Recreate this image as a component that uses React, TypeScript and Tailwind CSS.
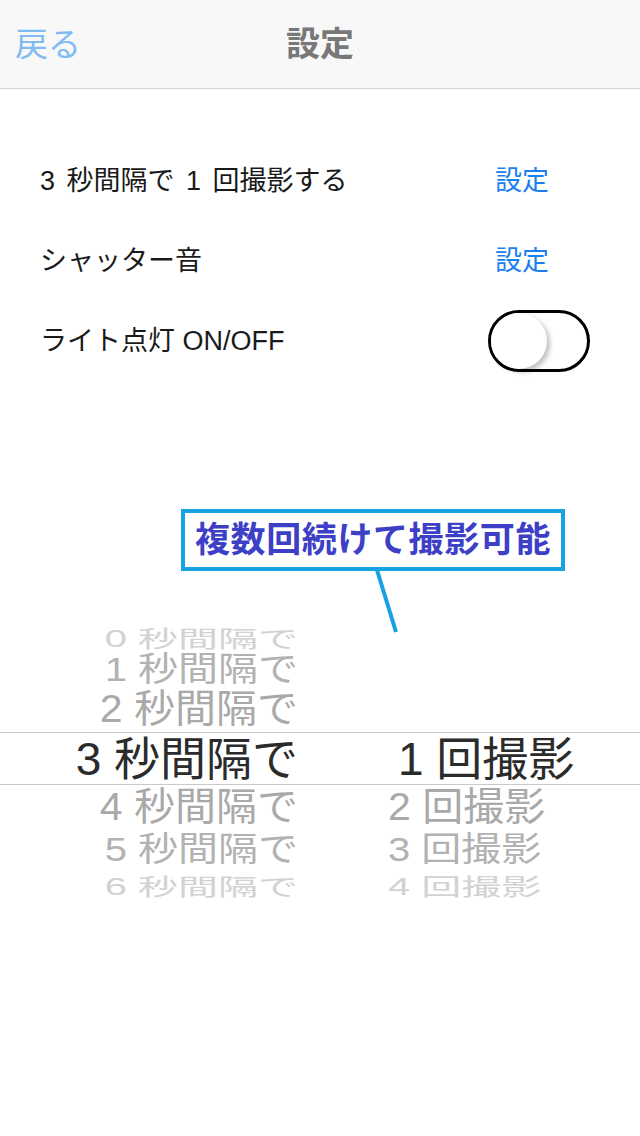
import React from "react";

const FONT = "font-['Liberation_Sans','Noto_Sans_CJK_JP',sans-serif]";

type WheelRow = {
  left: string;
  right?: string;
  height: string;
  size: string;
  scale: string;
  color: string;
  rightPad?: string;
};

// picker rows, top to bottom (perspective faked by size/scale)
const rows: WheelRow[] = [
  { left: "0 秒間隔で", height: "h-[30px]", size: "text-[40px]", scale: "scale-y-[0.58]", color: "text-[#d2d2d2]" },
  { left: "1 秒間隔で", height: "h-[38px]", size: "text-[40px]", scale: "scale-y-[0.84]", color: "text-[#b2b2b2]" },
  { left: "2 秒間隔で", height: "h-[45px]", size: "text-[41px]", scale: "scale-y-[0.95]", color: "text-[#a9a9a9]" },
  { left: "3 秒間隔で", right: "1 回撮影", height: "h-[53px]", size: "text-[46px]", scale: "scale-y-100", color: "text-[#2b2b2b]", rightPad: "pl-[10px]" },
  { left: "4 秒間隔で", right: "2 回撮影", height: "h-[44px]", size: "text-[41px]", scale: "scale-y-[0.95]", color: "text-[#a9a9a9]" },
  { left: "5 秒間隔で", right: "3 回撮影", height: "h-[38px]", size: "text-[40px]", scale: "scale-y-[0.84]", color: "text-[#b2b2b2]" },
  { left: "6 秒間隔で", right: "4 回撮影", height: "h-[30px]", size: "text-[40px]", scale: "scale-y-[0.58]", color: "text-[#d2d2d2]" },
];

const Toggle: React.FC = () => (
  <div className="w-[102px] h-[62px] rounded-full border-[3px] border-black bg-white flex items-center">
    <div className="w-[56px] h-[56px] rounded-full bg-white shadow-[3px_3px_5px_rgba(0,0,0,0.25)]" />
  </div>
);

const App: React.FC = () => {
  return (
    <div className={`w-[640px] h-[1136px] bg-white overflow-hidden ${FONT}`}>
      {/* nav bar */}
      <div className="h-[89px] bg-[#f8f8f8] border-b border-[#d4d4d4] grid grid-cols-[1fr_auto_1fr] items-center">
        <span className="pl-[15px] text-[33px] text-[#80bbf3] leading-none">戻る</span>
        <span className="text-[34px] font-bold text-[#787878] leading-none">設定</span>
        <span />
      </div>

      {/* settings rows */}
      <div className="pt-[52px]">
        <div className="h-[80px] flex items-center justify-between pl-[40px] pr-[91px]">
          <span className="text-[27px] text-[#1a1a1a] [word-spacing:4px]">3 秒間隔で 1 回撮影する</span>
          <span className="text-[27px] text-[#1b80ef]">設定</span>
        </div>
        <div className="h-[80px] flex items-center justify-between pl-[40px] pr-[91px]">
          <span className="text-[27px] text-[#1a1a1a]">シャッター音</span>
          <span className="text-[27px] text-[#1b80ef]">設定</span>
        </div>
        <div className="h-[80px] flex items-center justify-between pl-[40px] pr-[50px]">
          <span className="text-[27px] text-[#1a1a1a]">ライト点灯 ON/OFF</span>
          <Toggle />
        </div>
      </div>

      {/* callout */}
      <div className="relative mt-[128px] ml-[181px] w-[384px]">
        <div className="h-[62px] border-4 border-[#17a1e3] bg-white flex items-center justify-center">
          <span className="text-[35px] font-bold text-[#3d3fc6] tracking-[0.6px]">複数回続けて撮影可能</span>
        </div>
        <svg className="absolute left-[190px] top-[60px] z-10" width="30" height="66" viewBox="0 0 30 66">
          <line x1="6" y1="1" x2="25" y2="63" stroke="#17a1e3" strokeWidth="4" />
        </svg>
      </div>

      {/* picker */}
      <div className="mt-[48px]">
        {rows.map((r, i) => (
          <div
            key={i}
            className={`${r.height} grid grid-cols-[298px_1fr] gap-x-[90px] items-center ${
              i === 3 ? "border-y border-[#c9c9c9]" : ""
            }`}
          >
            <div className={`text-right whitespace-nowrap leading-none ${r.size} ${r.scale} ${r.color}`}>{r.left}</div>
            <div className={`whitespace-nowrap leading-none ${r.size} ${r.scale} ${r.color} ${r.rightPad ?? ""}`}>
              {r.right ?? ""}
            </div>
          </div>
        ))}
      </div>
    </div>
  );
};

export default App;
